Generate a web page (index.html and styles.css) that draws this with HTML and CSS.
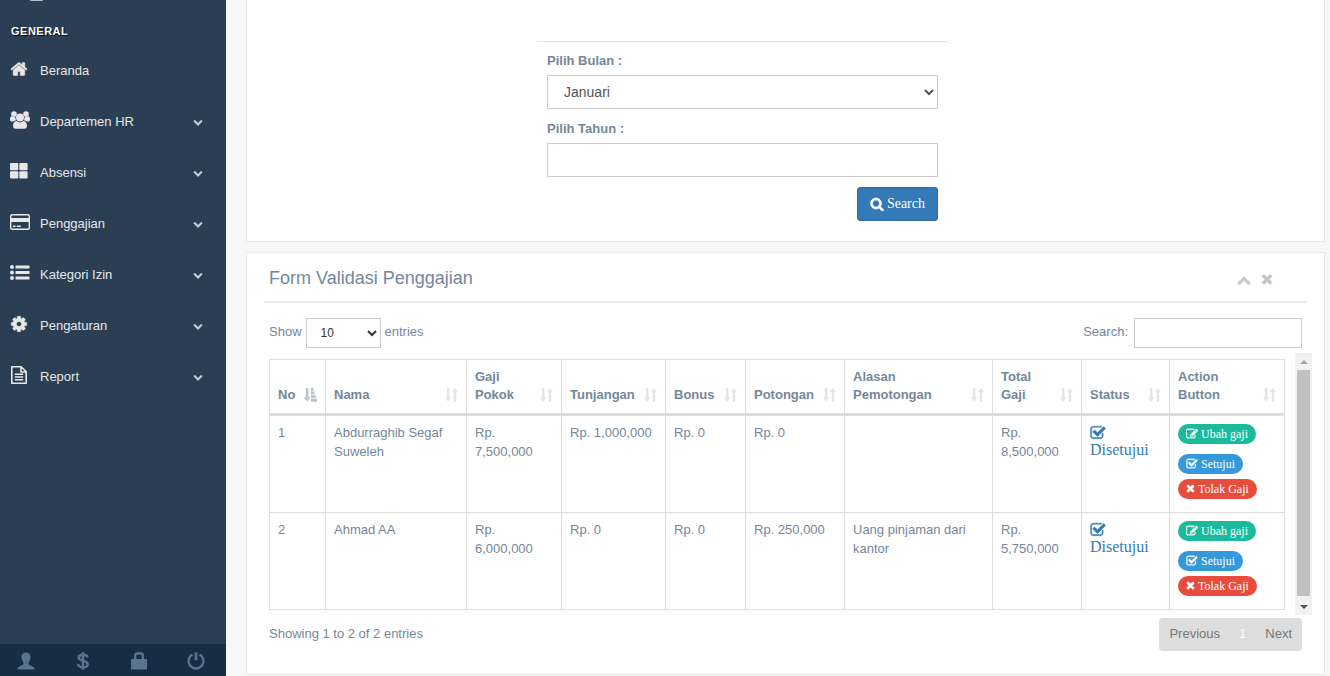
FILE: index.html
```html
<!DOCTYPE html>
<html lang="id">
<head>
<meta charset="utf-8">
<title>Validasi Penggajian</title>
<link rel="stylesheet" href="styles.css">
</head>
<body>
<svg class="sprite" aria-hidden="true">
  <symbol id="home" viewBox="0 0 1792 1792"><path stroke="currentColor" stroke-width="50" d="M1472 992v480q0 26-19 45t-45 19h-384v-384h-256v384h-384q-26 0-45-19t-19-45v-480q0-1 .5-3t.5-3l575-474 575 474q1 2 1 6zm223-69l-62 74q-8 9-21 11h-3q-13 0-21-7l-692-577-692 577q-12 8-24 7-13-2-21-11l-62-74q-8-10-7-23.5t11-21.5l719-599q32-26 76-26t76 26l244 204v-195q0-14 9-23t23-9h192q14 0 23 9t9 23v408l219 182q10 8 11 21.5t-7 23.5z"/></symbol>
  <symbol id="users" viewBox="0 0 20 18"><circle cx="4" cy="3" r="2.8"/><circle cx="16" cy="3" r="2.8"/><path d="M0 8.500c0-2 .8-3.500 2-3.500.7.500 1.300.8 2 .8.500 0 1-.1 1.300-.3-.1 1.600.3 2.700 1 3.700-1.300.1-2.200.5-3 1.300H2c-1.200 0-2-.5-2-2zM20 8.500c0-2-.8-3.500-2-3.500-.7.500-1.300.8-2 .8-.5 0-1-.1-1.300-.3.1 1.600-.3 2.700-1 3.700 1.300.1 2.200.5 3 1.300H18c1.200 0 2-.5 2-2z"/><circle cx="10" cy="6.500" r="4"/><path d="M6.500 10c1 .9 2.200 1.400 3.500 1.400s2.500-.5 3.500-1.400c2.300 0 3.500 2.200 3.500 5 0 1.800-1.100 2.800-2.800 2.800H5.800C4.100 17.800 3 16.800 3 15c0-2.800 1.200-5 3.500-5z"/></symbol>
  <symbol id="tiles" viewBox="0 0 18 16"><rect width="8.300" height="7.300" rx="1"/><rect x="9.300" width="8.300" height="7.300" rx="1"/><rect y="8.300" width="8.300" height="7.300" rx="1"/><rect x="9.300" y="8.300" width="8.300" height="7.300" rx="1"/></symbol>
  <symbol id="card" viewBox="0 0 20 16"><path fill-rule="evenodd" d="M2 0h16a2 2 0 0 1 2 2v12a2 2 0 0 1-2 2H2a2 2 0 0 1-2-2V2a2 2 0 0 1 2-2zm-.2 1.400q-.4 0-.4.600v2h17.200V2q0-.6-.4-.6zm-.4 6.600v6q0 .6.600.6h16q.6 0 .6-.6V8zM3 11.600h2.600v1.300H3zm3.800 0h4v1.300h-4z"/></symbol>
  <symbol id="list" viewBox="0 0 20 16"><circle cx="2" cy="2" r="2"/><circle cx="2" cy="7.500" r="2"/><circle cx="2" cy="13" r="2"/><rect x="5.500" y=".6" width="14" height="2.900" rx=".5"/><rect x="5.500" y="6.100" width="14" height="2.900" rx=".5"/><rect x="5.500" y="11.600" width="14" height="2.900" rx=".5"/></symbol>
  <symbol id="cog" viewBox="0 0 1792 1792"><path stroke="currentColor" stroke-width="60" d="M1152 896q0-106-75-181t-181-75-181 75-75 181 75 181 181 75 181-75 75-181zm512-109v222q0 12-8 23t-20 13l-185 28q-19 54-39 91 35 50 107 138 10 12 10 25t-9 23q-27 37-99 108t-94 71q-12 0-26-9l-138-108q-44 23-91 38-16 136-29 186-7 28-36 28h-222q-14 0-24.500-8.500t-11.500-21.500l-28-184q-49-16-90-37l-141 107q-10 9-25 9-14 0-25-11-126-114-165-168-7-10-7-23 0-12 8-23 15-21 51-66.500t54-70.500q-27-50-41-99l-183-27q-13-2-21-12.500t-8-23.500v-222q0-12 8-23t19-13l186-28q14-46 39-92-40-57-107-138-10-12-10-24 0-10 9-23 26-36 98.500-107.500t94.500-71.500q13 0 26 10l138 107q44-23 91-38 16-136 29-186 7-28 36-28h222q14 0 24.500 8.500t11.500 21.500l28 184q49 16 90 37l142-107q9-9 24-9 13 0 25 10 129 119 165 170 7 8 7 22 0 12-8 23-15 21-51 66.500t-54 70.500q26 50 41 98l183 28q13 2 21 12.500t8 23.500z"/></symbol>
  <symbol id="file" viewBox="0 0 16 18"><path fill="none" stroke="currentColor" stroke-width="1.600" stroke-linejoin="round" d="M.8.800h9.400l5 5v11.400H.8zM10 .8v5.200h5.200"/><path d="M3.800 7.600h8.400v1.500H3.800zm0 2.700h8.400v1.500H3.800zm0 2.700h8.400v1.500H3.800z"/></symbol>
  <symbol id="down" viewBox="0 0 1792 1792"><path d="M1683 808l-742 741q-19 19-45 19t-45-19l-742-741q-19-19-19-45.500t19-45.500l166-165q19-19 45-19t45 19l531 531 531-531q19-19 45-19t45 19l166 165q19 19 19 45.500t-19 45.500z"/></symbol>
  <symbol id="up" viewBox="0 0 1792 1792"><path stroke="currentColor" stroke-width="60" d="M1683 1331l-166 165q-19 19-45 19t-45-19l-531-531-531 531q-19 19-45 19t-45-19l-166-165q-19-19-19-45.500t19-45.500l742-741q19-19 45-19t45 19l742 741q19 19 19 45.500t-19 45.500z"/></symbol>
  <symbol id="times" viewBox="192 192 1408 1664"><path stroke="currentColor" stroke-width="40" d="M1490 1322q0 40-28 68l-136 136q-28 28-68 28t-68-28l-294-294-294 294q-28 28-68 28t-68-28l-136-136q-28-28-28-68t28-68l294-294-294-294q-28-28-28-68t28-68l136-136q28-28 68-28t68 28l294 294 294-294q28-28 68-28t68 28l136 136q28 28 28 68t-28 68l-294 294 294 294q28 28 28 68z"/></symbol>
  <symbol id="search" viewBox="0 0 1792 1792"><path stroke="currentColor" stroke-width="80" d="M1216 832q0-185-131.500-316.500t-316.500-131.500-316.500 131.500-131.500 316.500 131.500 316.500 316.500 131.500 316.500-131.500 131.500-316.500zm512 832q0 52-38 90t-90 38q-54 0-90-38l-343-342q-179 124-399 124-143 0-273.500-55.500t-225-150-150-225-55.500-273.500 55.500-273.500 150-225 225-150 273.500-55.500 273.500 55.500 225 150 150 225 55.500 273.500q0 220-124 399l343 343q37 37 37 90z"/></symbol>
  <symbol id="check" viewBox="0 0 1792 1792"><path stroke="currentColor" stroke-width="50" d="M1472 930v318q0 119-84.500 203.500t-203.500 84.500h-832q-119 0-203.500-84.500t-84.500-203.500v-832q0-119 84.500-203.500t203.500-84.500h832q63 0 117 25 15 7 18 23 3 17-9 29l-49 49q-10 10-23 10-3 0-9-2-23-6-45-6h-832q-66 0-113 47t-47 113v832q0 66 47 113t113 47h832q66 0 113-47t47-113v-254q0-13 9-22l64-64q10-10 23-10 6 0 12 3 20 8 20 29zm231-489l-814 814q-24 24-57 24t-57-24l-430-430q-24-24-24-57t24-57l110-110q24-24 57-24t57 24l263 263 647-647q24-24 57-24t57 24l110 110q24 24 24 57t-24 57z"/></symbol>
  <symbol id="edit" viewBox="0 0 1792 1792"><path stroke="currentColor" stroke-width="50" d="M888 1184l116-116-152-152-116 116v56h96v96h56zm440-720q-16-16-33 1l-350 350q-17 17-1 33t33-1l350-350q17-17 1-33zm80 594v190q0 119-84.500 203.500t-203.500 84.500h-832q-119 0-203.500-84.500t-84.500-203.500v-832q0-119 84.500-203.500t203.500-84.500h832q63 0 117 25 15 7 18 23 3 17-9 29l-49 49q-14 14-32 8-23-6-45-6h-832q-66 0-113 47t-47 113v832q0 66 47 113t113 47h832q66 0 113-47t47-113v-126q0-13 9-22l64-64q15-15 35-7t20 29zm-96-738l288 288-672 672h-288v-288zm444 132l-92 92-288-288 92-92q28-28 68-28t68 28l152 152q28 28 28 68t-28 68z"/></symbol>
  <symbol id="sort" viewBox="0 0 13 14"><path d="M1.900 0h2.500v9.300H6.200L3.100 13.700 0 9.300h1.900zM8.700 13.700h2.500V4.300H13L9.900 0 6.800 4.300h1.900z"/></symbol>
  <symbol id="sort-asc" viewBox="0 0 13 14"><path d="M1.900 0h2.500v9.300H6.200L3.100 13.700 0 9.300h1.900zM7 0h2.500v2.900H7zM7 3.600h3.500v2.900H7zM7 7.200h4.700v2.900H7zM7 10.800h6v2.900H7z"/></symbol>
  <symbol id="user" viewBox="0 0 18 18"><path d="M9 .5c2.800 0 4.500 1.700 4.500 4.500 0 2.200-.8 4-1.900 5v1.700c0 1 .7 1.300 2.500 2 2.400.9 3.600 1.600 3.600 3.800H.3c0-2.200 1.200-2.900 3.600-3.800 1.800-.7 2.500-1 2.500-2V10c-1.100-1-1.900-2.800-1.900-5C4.500 2.200 6.200.5 9 .5z"/></symbol>
  <symbol id="dollar" viewBox="0 0 12 18"><path fill="none" stroke="currentColor" stroke-width="2.400" d="M6 .3v17.400M10.500 5.500C10.300 3.600 8.700 2.700 6 2.700S1.700 3.700 1.700 5.600C1.700 10 10.700 7.600 10.700 12c0 2.200-1.700 3.300-4.700 3.300S1.300 14.200 1.200 12"/></symbol>
  <symbol id="lock" viewBox="0 0 17 18"><path fill="none" stroke="currentColor" stroke-width="2.300" d="M4.700 8V3.500q0-2 2-2h3.600q2 0 2 2V8"/><path d="M.5 7h16v10.500H.5z"/></symbol>
  <symbol id="power" viewBox="0 0 18 18"><path fill="none" stroke="currentColor" stroke-width="2.300" d="M5.500 2.600a7.400 7.400 0 1 0 7 0"/><path d="M7.600.3h2.800v8H7.600z"/></symbol>
</svg>
<div class="layout">
  <aside class="sidebar">
    <span class="avatar-edge"></span>
    <h3 class="menu-title">GENERAL</h3>
    <nav class="menu">
      <a href="#"><svg class="menu-icon"><use href="#home"/></svg><span>Beranda</span></a>
      <a href="#"><svg class="menu-icon wide"><use href="#users"/></svg><span>Departemen HR</span><svg class="chevron"><use href="#down"/></svg></a>
      <a href="#"><svg class="menu-icon"><use href="#tiles"/></svg><span>Absensi</span><svg class="chevron"><use href="#down"/></svg></a>
      <a href="#"><svg class="menu-icon wide"><use href="#card"/></svg><span>Penggajian</span><svg class="chevron"><use href="#down"/></svg></a>
      <a href="#"><svg class="menu-icon wide"><use href="#list"/></svg><span>Kategori Izin</span><svg class="chevron"><use href="#down"/></svg></a>
      <a href="#"><svg class="menu-icon"><use href="#cog"/></svg><span>Pengaturan</span><svg class="chevron"><use href="#down"/></svg></a>
      <a href="#"><svg class="menu-icon"><use href="#file"/></svg><span>Report</span><svg class="chevron"><use href="#down"/></svg></a>
    </nav>
    <div class="sidebar-footer">
      <a href="#" aria-label="Profil"><svg><use href="#user"/></svg></a>
      <a href="#" aria-label="Gaji"><svg><use href="#dollar"/></svg></a>
      <a href="#" aria-label="Kunci"><svg><use href="#lock"/></svg></a>
      <a href="#" aria-label="Keluar"><svg><use href="#power"/></svg></a>
    </div>
  </aside>
  <main class="main">
    <section class="panel filter-panel">
      <form class="filter">
        <label for="bulan">Pilih Bulan :</label>
        <select id="bulan"><option>Januari</option></select>
        <label for="tahun">Pilih Tahun :</label>
        <input id="tahun" type="text">
        <button class="search-btn" type="button"><svg><use href="#search"/></svg>Search</button>
      </form>
    </section>
    <section class="panel data-panel">
      <header class="panel-head">
        <h2>Form Validasi Penggajian</h2>
        <div class="tools">
          <button type="button" aria-label="Ciutkan"><svg><use href="#up"/></svg></button>
          <button type="button" aria-label="Tutup"><svg><use href="#times"/></svg></button>
        </div>
      </header>
      <div class="panel-body">
        <div class="table-controls">
          <label>Show <select class="length"><option>10</option></select> entries</label>
          <label>Search: <input class="table-search" type="text"></label>
        </div>
        <div class="scroll-area">
          <table>
            <colgroup><col class="c-no"><col class="c-nama"><col class="c-pokok"><col class="c-tunj"><col class="c-bonus"><col class="c-pot"><col class="c-alasan"><col class="c-total"><col class="c-status"><col class="c-aksi"></colgroup>
            <thead>
              <tr>
                <th><div>No<svg class="sorted"><use href="#sort-asc"/></svg></div></th>
                <th><div>Nama<svg><use href="#sort"/></svg></div></th>
                <th><div><span>Gaji<br>Pokok</span><svg><use href="#sort"/></svg></div></th>
                <th><div>Tunjangan<svg><use href="#sort"/></svg></div></th>
                <th><div>Bonus<svg><use href="#sort"/></svg></div></th>
                <th><div>Potongan<svg><use href="#sort"/></svg></div></th>
                <th><div><span>Alasan<br>Pemotongan</span><svg><use href="#sort"/></svg></div></th>
                <th><div><span>Total<br>Gaji</span><svg><use href="#sort"/></svg></div></th>
                <th><div>Status<svg><use href="#sort"/></svg></div></th>
                <th><div><span>Action<br>Button</span><svg><use href="#sort"/></svg></div></th>
              </tr>
            </thead>
            <tbody>
              <tr>
                <td>1</td><td>Abdurraghib Segaf Suweleh</td><td>Rp. 7,500,000</td><td>Rp. 1,000,000</td><td>Rp. 0</td><td>Rp. 0</td><td></td><td>Rp. 8,500,000</td>
                <td><a class="status" href="#"><svg><use href="#check"/></svg>Disetujui</a></td>
                <td><div class="actions"><button class="badge green" type="button"><svg><use href="#edit"/></svg>Ubah gaji</button><button class="badge blue" type="button"><svg><use href="#check"/></svg>Setujui</button><button class="badge red" type="button"><svg class="x"><use href="#times"/></svg>Tolak Gaji</button></div></td>
              </tr>
              <tr>
                <td>2</td><td>Ahmad AA</td><td>Rp. 6,000,000</td><td>Rp. 0</td><td>Rp. 0</td><td>Rp. 250,000</td><td>Uang pinjaman dari kantor</td><td>Rp. 5,750,000</td>
                <td><a class="status" href="#"><svg><use href="#check"/></svg>Disetujui</a></td>
                <td><div class="actions"><button class="badge green" type="button"><svg><use href="#edit"/></svg>Ubah gaji</button><button class="badge blue" type="button"><svg><use href="#check"/></svg>Setujui</button><button class="badge red" type="button"><svg class="x"><use href="#times"/></svg>Tolak Gaji</button></div></td>
              </tr>
            </tbody>
          </table>
          <div class="scrollbar" aria-hidden="true"><i class="arrow-up"></i><i class="thumb"></i><i class="arrow-down"></i></div>
        </div>
        <div class="table-footer">
          <p>Showing 1 to 2 of 2 entries</p>
          <div class="pagination"><a href="#">Previous</a><a class="current" href="#">1</a><a href="#">Next</a></div>
        </div>
      </div>
    </section>
  </main>
</div>
</body>
</html>
```
FILE: styles.css
```css
* { box-sizing: border-box; }

body {
  margin: 0;
  background: #f7f7f7;
  color: #73879c;
  font: 13px/19px "Liberation Sans", Arial, sans-serif;
}

a { text-decoration: none; }
svg { fill: currentColor; flex: none; }
button, input, select { font: inherit; }
.sprite { position: absolute; width: 0; height: 0; }

.layout { display: flex; min-height: 100vh; }

/* Sidebar */
.sidebar {
  position: relative;
  display: flex;
  flex-direction: column;
  flex: 0 0 226px;
  background: #2a3f54;
}

.avatar-edge {
  position: absolute;
  top: 0;
  left: 30px;
  width: 13px;
  height: 1px;
  background: #aebfd0;
  border-radius: 0 0 6px 6px;
}

.menu-title {
  margin: 0;
  padding: 22px 11px 4px;
  color: #fff;
  font-size: 11px;
  letter-spacing: 0.5px;
  text-shadow: 1px 1px #000;
}

.menu a {
  display: flex;
  align-items: center;
  height: 51px;
  padding: 0 23px 0 10px;
  color: #e7e7e7;
  font-weight: 500;
}

.menu span { flex: 1; }
.menu-icon { width: 18px; height: 18px; margin: 0 12px 4px 0; }
.menu-icon.wide { width: 20px; margin-right: 10px; }
.chevron { width: 10px; height: 10px; color: #c4cfda; }

.sidebar-footer {
  display: flex;
  height: 32px;
  margin-top: auto;
  background: #172d44;
}

.sidebar-footer a {
  display: flex;
  flex: 1;
  align-items: center;
  justify-content: center;
  padding: 2px 4px 0 0;
  color: #5a738e;
}

.sidebar-footer svg { width: 18px; height: 18px; }

/* Panels */
.main { flex: 1; min-width: 0; padding: 0 5px 0 20px; }
.panel { border: 1px solid #e6e9ed; background: #fff; }

.filter-panel {
  display: flex;
  justify-content: center;
  padding: 41px 17px 20px;
  border-top: 0;
}

.filter {
  display: flex;
  flex-direction: column;
  width: 40%;
  max-width: 411px;
  margin-right: 86px;
  padding: 9px 10px 0;
  border-top: 1px solid #e1e4e6;
}

.filter label { margin-bottom: 5px; font-weight: 700; }

.filter select, .filter input {
  height: 34px;
  margin-bottom: 10px;
  padding: 6px 12px;
  border: 1px solid #ccc;
  border-radius: 0;
  background: #fff;
  color: #555;
  font-size: 14px;
}

.search-btn {
  display: flex;
  align-items: center;
  align-self: flex-end;
  gap: 3px;
  height: 34px;
  padding: 0 12px;
  border: 1px solid #2e6da4;
  border-radius: 3px;
  background: #337ab7;
  color: #fff;
  font: 14px "Liberation Serif", "Times New Roman", serif;
}

.search-btn svg { width: 14px; height: 14px; }

.data-panel { margin-top: 10px; padding: 10px 17px 23px; }

.panel-head {
  display: flex;
  justify-content: space-between;
  padding: 0 33px 8px 5px;
  border-bottom: 2px solid #e6e9ed;
}

.panel-head h2 { margin: 0; font-size: 18px; font-weight: 400; line-height: 30px; }
.tools { display: flex; align-items: center; gap: 9px; padding-top: 3px; }
.tools button { display: flex; padding: 0; border: 0; background: none; color: #c5c7cb; }
.tools svg { width: 14px; height: 14px; }

.panel-body { padding: 15px 5px 0; }
.table-controls { display: flex; justify-content: space-between; }
.table-controls label { display: flex; gap: 4px; line-height: 27px; }
.table-controls label:last-child { gap: 6px; }

.length, .table-search {
  height: 30px;
  padding: 5px 10px;
  border: 1px solid #ccc;
  border-radius: 0;
  background: #fff;
  color: #333;
  font-size: 12px;
}

.length { width: 75px; }
.table-search { width: 168px; }

/* Table */
.scroll-area {
  display: flex;
  align-items: stretch;
  gap: 10px;
  margin: 5px -10px 3px 0;
}

table {
  flex: 1;
  width: 100%;
  min-width: 0;
  margin: 6px 0 5px;
  border-collapse: collapse;
  table-layout: fixed;
}

th, td {
  padding: 8px;
  border: 1px solid #ddd;
  text-align: left;
  vertical-align: top;
}

th { padding-bottom: 9px; border-bottom: 3px solid #ddd; line-height: 18px; vertical-align: bottom; }
th div { display: flex; align-items: flex-end; justify-content: space-between; }
th svg { width: 13px; height: 14px; margin-bottom: 2px; color: #e2e5e9; }
th svg.sorted { color: #b9c3cd; }
td { height: 97px; padding-top: 7px; }
tbody tr:first-child td { height: 98px; }

.c-no { width: 56px; }
.c-nama { width: 141px; }
.c-pokok { width: 95px; }
.c-tunj { width: 104px; }
.c-bonus { width: 80px; }
.c-pot { width: 99px; }
.c-alasan { width: 148px; }
.c-total { width: 89px; }
.c-status { width: 88px; }
.c-aksi { width: 115px; }

.status {
  display: flex;
  flex-direction: column;
  padding-top: 2px;
  color: #337ab7;
  font: 16px/18px "Liberation Serif", "Times New Roman", serif;
}

.status svg { width: 16px; height: 16px; }

.actions { display: flex; flex-direction: column; align-items: flex-start; gap: 5px; padding-top: 1px; }

.badge {
  display: flex;
  align-items: center;
  gap: 3px;
  height: 20px;
  padding: 0 8px;
  border: 0;
  border-radius: 10px;
  color: #fff;
  font: 12px "Liberation Serif", "Times New Roman", serif;
}

.badge svg { width: 12px; height: 12px; }
.badge svg.x { width: 9px; }
.green { margin-bottom: 5px; background: #1abb9c; }
.blue { background: #3498db; }
.red { background: #e74c3c; }

.scrollbar {
  display: flex;
  flex: 0 0 17px;
  flex-direction: column;
  align-items: center;
  justify-content: space-between;
  padding: 7px 0 6px;
  background: #f1f1f1;
}

.arrow-up, .arrow-down { border: 4px solid transparent; }
.arrow-up { border-top: 0; border-bottom-color: #a3a3a3; }
.arrow-down { border-bottom: 0; border-top-color: #505050; }
.thumb { flex: 1; width: 13px; margin: 6px 0 9px; background: #c1c1c1; }

.table-footer { display: flex; justify-content: space-between; }
.table-footer p { margin: 0; padding-top: 6px; }
.pagination { display: flex; border-radius: 4px; background: #ddd; }
.pagination a { padding: 6px 10px 8px; color: #777; }
.pagination .current { padding: 6px 9px 8px; color: #fff; }
```
